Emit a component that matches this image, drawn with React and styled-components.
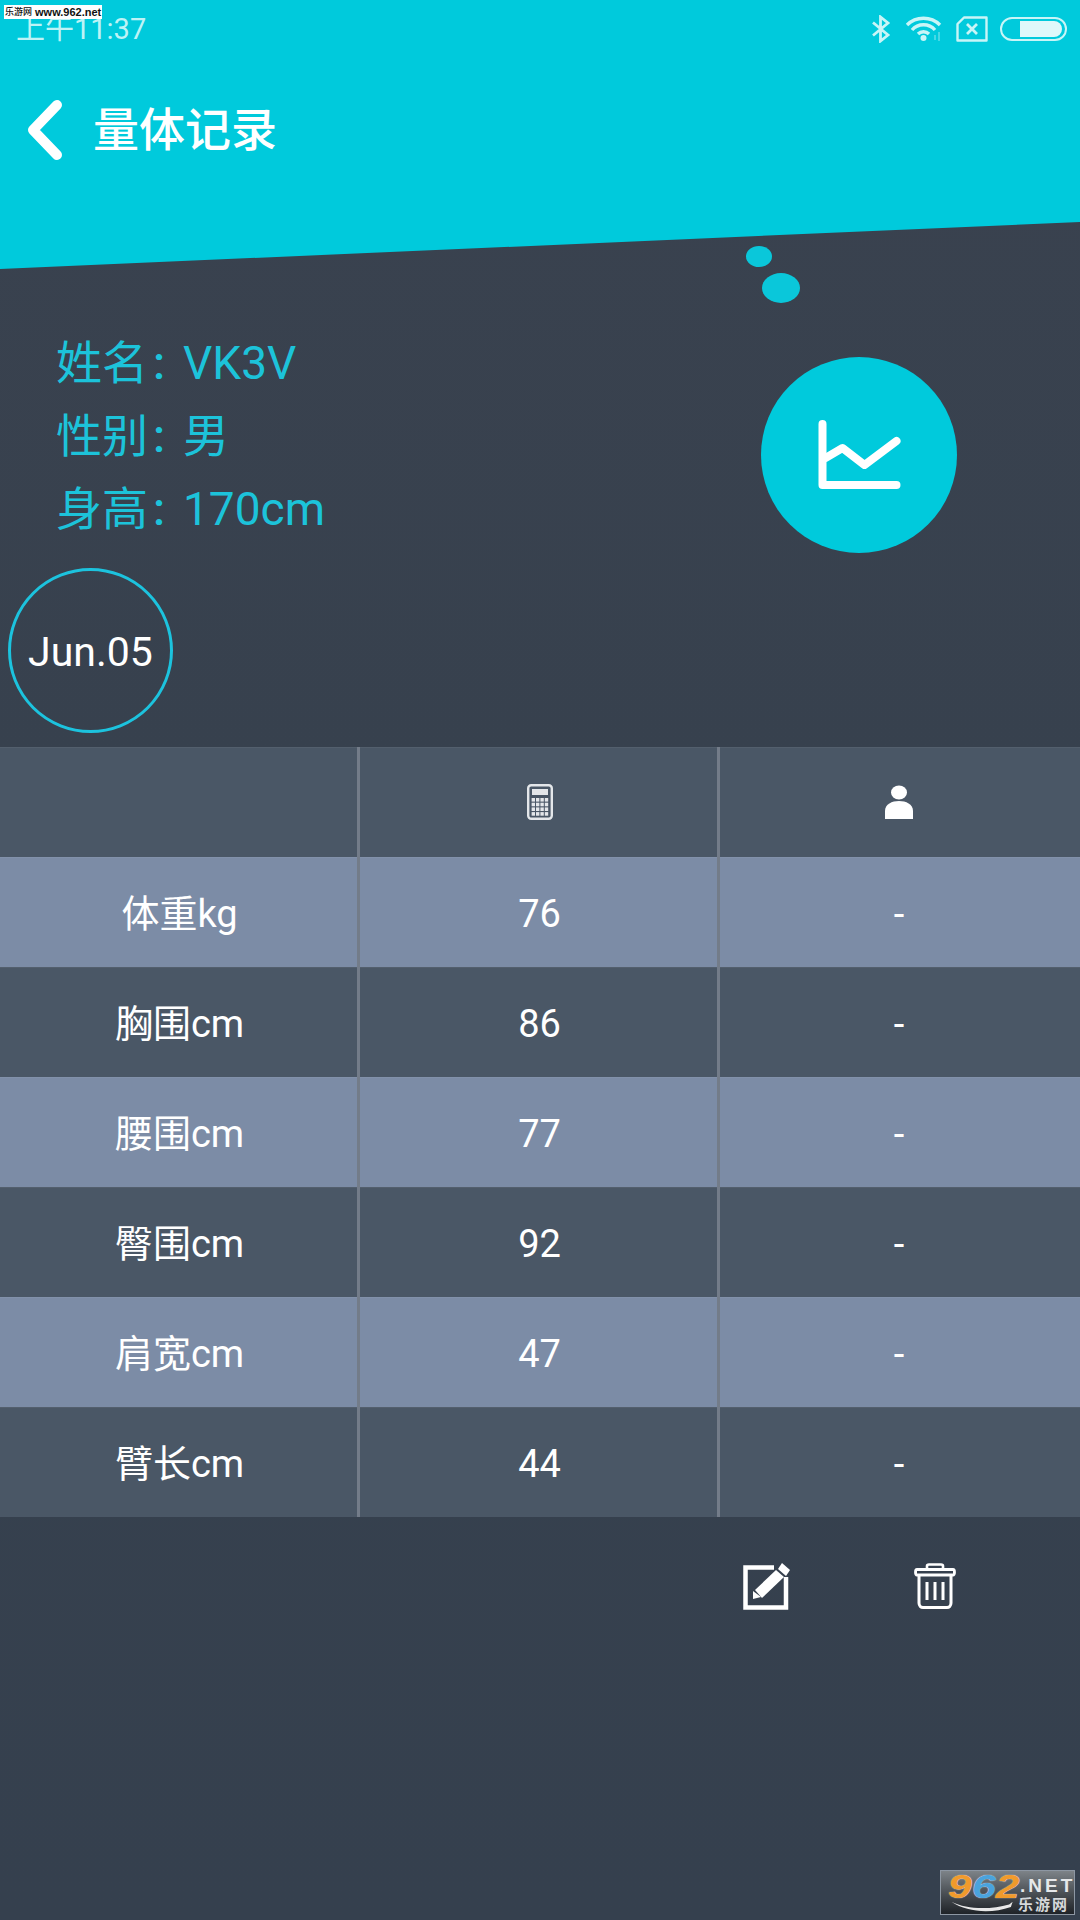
import React from "react";
import styled, { createGlobalStyle } from "styled-components";

const GlobalStyle = createGlobalStyle`
  html, body {
    margin: 0;
    padding: 0;
    background: #36414e;
  }
  * {
    box-sizing: border-box;
  }
`;

const Page = styled.div`
  position: relative;
  display: flex;
  flex-direction: column;
  width: 1080px;
  height: 1920px;
  overflow: hidden;
  color: #fff;
  font-family: Roboto, "Noto Sans CJK SC", sans-serif;
  background: linear-gradient(180deg, #3a424f 0%, #37414e 40%, #35404e 100%);
`;

const TopBand = styled.header`
  height: 269px;
  background: #00cadc;
  clip-path: polygon(0 0, 100% 0, 100% 222px, 0 100%);
`;

const StatusBar = styled.div`
  display: flex;
  align-items: center;
  justify-content: space-between;
  height: 58px;
  padding: 0 13px 0 16px;
`;

const Clock = styled.span`
  font-size: 29px;
  color: #bdf3f6;
  line-height: 1;
`;

const StatusIcons = styled.div`
  display: flex;
  align-items: center;
  gap: 12px;
  svg {
    display: block;
  }
`;

const TitleRow = styled.div`
  display: flex;
  align-items: center;
  height: 82px;
  margin-top: 31px;
  padding-left: 26px;
  gap: 29px;
`;

const Title = styled.h1`
  margin: 0;
  font-size: 46px;
  font-weight: 500;
  line-height: 1;
  color: #fff;
`;

const Watermark = styled.div`
  position: absolute;
  left: 4px;
  top: 5px;
  display: flex;
  align-items: center;
  gap: 3px;
  width: 98px;
  height: 14px;
  padding-left: 1px;
  background: #fff;
  color: #111;
  font-family: "Liberation Sans", sans-serif;
  font-size: 11px;
  font-weight: 700;
  line-height: 14px;
  white-space: nowrap;
`;

const WatermarkCn = styled.span`
  font-family: "Noto Sans CJK SC", sans-serif;
  font-size: 9px;
  font-weight: 500;
`;

const Bubble = styled.span`
  position: absolute;
  left: ${(p) => p.$x}px;
  top: ${(p) => p.$y}px;
  width: ${(p) => p.$w}px;
  height: ${(p) => p.$h}px;
  border-radius: 50%;
  background: #0ac7da;
`;

const Profile = styled.section`
  display: flex;
  justify-content: space-between;
  align-items: flex-start;
  padding: 57px 123px 0 56px;
`;

const InfoList = styled.div`
  display: flex;
  flex-direction: column;
`;

const InfoLine = styled.div`
  display: flex;
  align-items: center;
  height: 73px;
  font-size: 46px;
  line-height: 60px;
  color: #1cc3da;
`;

const Colon = styled.span`
  width: 35px;
  padding-left: 5px;
  font-weight: 500;
`;

const ChartButton = styled.div`
  display: flex;
  align-items: center;
  justify-content: center;
  width: 196px;
  height: 196px;
  margin-top: 31px;
  border-radius: 50%;
  background: #00cadc;
`;

const DateBadge = styled.div`
  display: flex;
  align-items: center;
  justify-content: center;
  width: 165px;
  height: 165px;
  margin: 15px 0 0 8px;
  padding-top: 2px;
  border: 3px solid #1cc3de;
  border-radius: 50%;
  font-size: 41px;
  color: #fff;
`;

const Table = styled.div`
  margin-top: 14px;
  display: flex;
  flex-direction: column;
`;

const Row = styled.div`
  display: grid;
  grid-template-columns: 360px 360px 360px;
  height: 110px;
  background: ${(p) => (p.$light ? "#7c8ca6" : "#4a5766")};
  box-shadow: inset 0 1px 0 rgba(255, 255, 255, 0.05);
`;

const Cell = styled.div`
  display: flex;
  align-items: center;
  justify-content: center;
  padding: 3px ${(p) => (p.$last ? 2 : 0)}px 0 ${(p) => (p.$last ? 0 : 2)}px;
  font-size: 38px;
  line-height: 1;
  color: #fff;
  border-right: ${(p) => (p.$last ? "0" : "3px solid #737c89")};
`;

const IconCell = styled(Cell)`
  padding-top: 0;
`;

const Actions = styled.div`
  display: flex;
  justify-content: flex-end;
  align-items: flex-start;
  gap: 124px;
  padding: 46px 124px 0 0;
  svg {
    display: block;
  }
`;

const Logo = styled.div`
  position: absolute;
  left: 940px;
  top: 1870px;
  width: 135px;
  height: 45px;
  border: 1px solid #8d97a3;
  background: linear-gradient(180deg, #7d8388 0%, #4c5156 50%, #1f2328 100%);
`;

const LogoNumber = styled.span`
  position: absolute;
  left: 7px;
  top: 1px;
  font-family: "Liberation Sans", sans-serif;
  font-size: 33px;
  font-weight: 700;
  font-style: italic;
  line-height: 30px;
  white-space: nowrap;
  color: #f09a2c;
  text-shadow: 0 0 1px #fff;
  transform: scaleX(1.3);
  transform-origin: left center;
`;

const LogoBlue = styled.span`
  color: #4aa3dd;
`;

const LogoDomain = styled.span`
  position: absolute;
  left: 79px;
  top: 5px;
  font-family: "Liberation Sans", sans-serif;
  font-size: 19px;
  font-weight: 700;
  letter-spacing: 3px;
  line-height: 20px;
  white-space: nowrap;
  color: #e6e8ea;
`;

const LogoCn = styled.span`
  position: absolute;
  left: 77px;
  top: 25px;
  font-size: 15px;
  font-weight: 700;
  letter-spacing: 2px;
  line-height: 18px;
  white-space: nowrap;
  color: #d5d8da;
`;

const LogoSwoosh = styled.svg`
  position: absolute;
  left: 6px;
  top: 29px;
`;

const BackIcon = () => (
  <svg width="38" height="60" viewBox="0 0 38 60">
    <path d="M31 5 L7 30 L31 55" fill="none" stroke="#fff" strokeWidth="10" strokeLinecap="round" strokeLinejoin="round" />
  </svg>
);

const BluetoothIcon = () => (
  <svg width="24" height="28" viewBox="-2 0 24 28">
    <path d="M2 7.5 L17 20 L9.5 26 V2 L17 8 L2 20.5" fill="none" stroke="#c8f5f7" strokeWidth="2.8" />
  </svg>
);

const WifiIcon = () => (
  <svg width="39" height="26" viewBox="-1 0 39 26">
    <g fill="none" stroke="#c8f5f7" strokeWidth="3.4">
      <path d="M1 9 C10 0 25 0 34 9" />
      <path d="M6 14 C12 7 23 7 29 14" />
      <path d="M12 18 C15 15 20 15 23 18" />
    </g>
    <circle cx="17.5" cy="22" r="3" fill="#c8f5f7" />
    <path d="M29 24 V19 M33 25 V16" stroke="#c8f5f7" strokeWidth="1" opacity="0.7" />
  </svg>
);

const SimIcon = () => (
  <svg width="32" height="26" viewBox="0 0 32 26">
    <path d="M8 1.5 H30.5 V24.5 H1.5 V8 Z" fill="none" stroke="#c8f5f7" strokeWidth="2.4" strokeLinejoin="round" />
    <path d="M11 8 L21 18 M21 8 L11 18" stroke="#c8f5f7" strokeWidth="2.8" />
  </svg>
);

const BatteryIcon = () => (
  <svg width="67" height="24" viewBox="0 0 67 24">
    <rect x="1" y="1" width="65" height="22" rx="11" fill="none" stroke="#c8f5f7" strokeWidth="2" />
    <path d="M20 4 H54 A8 8 0 0 1 54 20 H20 Z" fill="#dff8fa" />
  </svg>
);

const ChartIcon = () => (
  <svg width="84" height="72" viewBox="-1.5 0 84 72">
    <path d="M4 5 V66 H78" fill="none" stroke="#fff" strokeWidth="8" strokeLinecap="round" strokeLinejoin="round" />
    <path d="M7 39 L24 29 L46 46 L78 22" fill="none" stroke="#fff" strokeWidth="8" strokeLinecap="round" strokeLinejoin="round" />
  </svg>
);

const CalculatorIcon = () => (
  <svg width="26" height="36" viewBox="0 0 26 36">
    <rect x="1.2" y="1.2" width="23.6" height="33.6" rx="3" fill="none" stroke="#e4e7ea" strokeWidth="2.4" />
    <rect x="5" y="5" width="16" height="6" fill="#e4e7ea" />
    {[0, 1, 2, 3].map((r) =>
      [0, 1, 2, 3].map((c) => (
        <rect key={`${r}-${c}`} x={4.6 + c * 4.4} y={14 + r * 4.7} width="3.4" height="3.6" fill="#e4e7ea" />
      ))
    )}
  </svg>
);

const PersonIcon = () => (
  <svg width="30" height="34" viewBox="0 0 30 34">
    <ellipse cx="15" cy="7.5" rx="8" ry="7" fill="#fff" />
    <path d="M1 34 V26 C1 19 8 16 15 16 C22 16 29 19 29 26 V34 Z" fill="#fff" />
  </svg>
);

const EditIcon = () => (
  <svg width="47" height="47" viewBox="0 0 47 47">
    <path d="M31 4.5 H2.5 V44.5 H43 V14" fill="none" stroke="#fff" strokeWidth="4.5" />
    <path d="M39 0 L47 7 L43 13 L35 6 Z" fill="#fff" />
    <path d="M33 7 L41 14 L19 35 L12 27 Z" fill="#fff" />
    <path d="M10 28 L18 34 L10 36 Z" fill="#fff" />
  </svg>
);

const TrashIcon = () => (
  <svg width="42" height="46" viewBox="0 0 42 46">
    <path d="M13 6 V3 C13 2 14 1.5 15 1.5 H27 C28 1.5 29 2 29 3 V6" fill="none" stroke="#fff" strokeWidth="2.6" />
    <path d="M3 6.5 H39 C41 6.5 41 12 39 12 H3 C1 12 1 6.5 3 6.5 Z" fill="none" stroke="#fff" strokeWidth="2.8" />
    <path d="M5 12 V40 C5 43 7 44.5 9 44.5 H33 C35 44.5 37 43 37 40 V12" fill="none" stroke="#fff" strokeWidth="3" />
    <path d="M13 19 V37 M21 19 V37 M29 19 V37" stroke="#fff" strokeWidth="3" />
  </svg>
);

const ROWS = [
  ["体重kg", "76"],
  ["胸围cm", "86"],
  ["腰围cm", "77"],
  ["臀围cm", "92"],
  ["肩宽cm", "47"],
  ["臂长cm", "44"],
];

const INFO = [
  ["姓名", "VK3V"],
  ["性别", "男"],
  ["身高", "170cm"],
];

export default function App() {
  return (
    <Page>
      <GlobalStyle />
      <TopBand>
        <StatusBar>
          <Clock>上午11:37</Clock>
          <StatusIcons>
            <BluetoothIcon />
            <WifiIcon />
            <SimIcon />
            <BatteryIcon />
          </StatusIcons>
        </StatusBar>
        <TitleRow>
          <BackIcon />
          <Title>量体记录</Title>
        </TitleRow>
      </TopBand>
      <Watermark>
        <WatermarkCn>乐游网</WatermarkCn>www.962.net
      </Watermark>
      <Bubble $x={746} $y={246} $w={26} $h={21} />
      <Bubble $x={762} $y={273} $w={38} $h={30} />

      <Profile>
        <InfoList>
          {INFO.map(([label, value]) => (
            <InfoLine key={label}>
              {label}
              <Colon>:</Colon>
              {value}
            </InfoLine>
          ))}
        </InfoList>
        <ChartButton>
          <ChartIcon />
        </ChartButton>
      </Profile>

      <DateBadge>Jun.05</DateBadge>

      <Table>
        <Row>
          <IconCell />
          <IconCell>
            <CalculatorIcon />
          </IconCell>
          <IconCell $last>
            <PersonIcon />
          </IconCell>
        </Row>
        {ROWS.map(([name, value], i) => (
          <Row key={name} $light={i % 2 === 0}>
            <Cell>{name}</Cell>
            <Cell>{value}</Cell>
            <Cell $last>-</Cell>
          </Row>
        ))}
      </Table>

      <Actions>
        <EditIcon />
        <TrashIcon />
      </Actions>

      <Logo>
        <LogoNumber>
          9<LogoBlue>6</LogoBlue>2
        </LogoNumber>
        <LogoDomain>.NET</LogoDomain>
        <LogoCn>乐游网</LogoCn>
        <LogoSwoosh width="70" height="14" viewBox="0 0 70 16">
          <path d="M0 2 C18 11 45 11 66 5 L70 2 L68 8 C45 16 18 14 0 2 Z" fill="#e8e8e8" />
        </LogoSwoosh>
      </Logo>
    </Page>
  );
}
